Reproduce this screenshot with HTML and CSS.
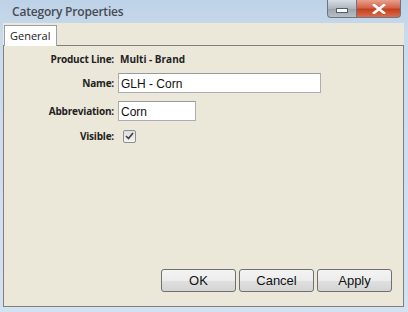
FILE: index.html
```html
<!DOCTYPE html>
<html lang="en">
<head>
  <meta charset="UTF-8" />
  <title>Category Properties</title>
  <link rel="stylesheet" href="styles.css">
</head>
<body>
  <div class="window">
    <div class="titlebar">
      <span class="title">Category Properties</span>
      <div class="caption-btns">
        <span class="cap-min"><span class="min-bar"></span></span>
        <span class="cap-close">
          <svg width="14" height="10" viewBox="0 0 14 10">
            <path d="M2 1 L12 9 M12 1 L2 9" stroke="#fff" stroke-width="2.6" stroke-linecap="square" />
          </svg>
        </span>
      </div>
    </div>

    <div class="client">
      <div class="tabs">
        <span class="tab active">General</span>
      </div>
      <div class="panel">
        <div class="form">
          <div class="row row-line">
            <label>Product Line:</label>
            <span class="value">Multi - Brand</span>
          </div>
          <div class="row row-name">
            <label for="name">Name:</label>
            <input id="name" class="field field-wide" type="text" value="GLH - Corn" />
          </div>
          <div class="row row-abbr">
            <label for="abbr">Abbreviation:</label>
            <input id="abbr" class="field field-short" type="text" value="Corn" />
          </div>
          <div class="row row-visible">
            <label>Visible:</label>
            <span class="check">
              <svg width="9" height="8" viewBox="0 0 9 8">
                <path d="M1 4 L3.5 6.5 L8 1" fill="none" stroke="#444" stroke-width="1.7" />
              </svg>
            </span>
          </div>
        </div>

        <div class="actions">
          <button>OK</button>
          <button>Cancel</button>
          <button>Apply</button>
        </div>
      </div>
    </div>
  </div>
</body>
</html>
```

FILE: styles.css
```css
html, body {
  margin: 0;
  height: 100%;
}
body {
  background: #cfdeee;
}

.window {
  height: 100%;
  display: flex;
  flex-direction: column;
  background: linear-gradient(to bottom, #bed2e7 0px, #cadbed 40px, #d3e2f1 100%);
  box-sizing: border-box;
}

.titlebar {
  height: 23px;
  display: flex;
  justify-content: space-between;
  align-items: flex-start;
  padding-left: 12px;
}
.title {
  font-family: "Open Sans", sans-serif;
  font-size: 12px;
  font-weight: 600;
  color: #474b52;
  margin-top: 3px;
  letter-spacing: -0.2px;
}
.caption-btns {
  display: flex;
  margin-right: 7px;
}
.cap-min, .cap-close {
  height: 18px;
  display: flex;
  align-items: center;
  justify-content: center;
  box-sizing: border-box;
  border: 1px solid #6d7580;
  border-top: none;
}
.cap-min {
  width: 30px;
  border-radius: 0 0 0 4px;
  background: linear-gradient(to bottom, #d8dde3, #aeb6bf 50%, #9aa3ad 51%, #b7bec6);
}
.min-bar {
  width: 10px;
  height: 3px;
  margin-top: 4px;
  background: #fff;
  border: 1px solid #555d66;
}
.cap-close {
  width: 44px;
  border-left: none;
  border-radius: 0 0 4px 0;
  background: linear-gradient(to bottom, #e8a08c, #d4644a 45%, #c4401f 55%, #d96e4c);
}

.client {
  flex: 1;
  margin: 0 4px 5px 3px;
  background: #ebe7d9;
  display: flex;
  flex-direction: column;
}
.tabs {
  height: 22px;
  display: flex;
  align-items: flex-end;
  padding-left: 1px;
}
.tab {
  font-family: "Open Sans", sans-serif;
  font-size: 11px;
  color: #222;
  background: #fff;
  height: 21px;
  box-sizing: border-box;
  padding: 2px 6px 0 5px;
  border: 1px solid #9aa0a6;
  border-bottom: none;
  margin-bottom: -1px;
  position: relative;
}

.panel {
  flex: 1;
  border: 1px solid #7f7f7f;
  display: flex;
  flex-direction: column;
  justify-content: space-between;
}

.form {
  padding-top: 4px;
  font-family: "Open Sans", sans-serif;
  font-size: 10px;
  color: #222;
}
.row {
  display: flex;
  align-items: center;
  height: 20px;
}
.row label {
  width: 110px;
  text-align: right;
  font-weight: 700;
  margin-right: 4px;
  letter-spacing: -0.2px;
}
.row-line { height: 18px; }
.row-name { margin-top: 5px; }
.row-abbr { margin-top: 8px; }
.row-visible { margin-top: 5px; }

.value {
  font-weight: 700;
  margin-left: 2px;
}

.field {
  height: 20px;
  box-sizing: border-box;
  border: 1px solid #abadb3;
  border-top-color: #979a9f;
  background: #fff;
  font-family: "Liberation Sans", Arial, sans-serif;
  font-size: 12px;
  color: #111;
  padding: 1px 2px 0;
  margin: 0;
}
.field-wide { width: 203px; }
.field-short { width: 78px; }

.check {
  width: 13px;
  height: 13px;
  margin-left: 5px;
  box-sizing: border-box;
  border: 1px solid #8f8f8f;
  border-radius: 2px;
  background: linear-gradient(to bottom, #dedede, #f4f4f4);
  display: flex;
  align-items: center;
  justify-content: center;
}

.actions {
  display: flex;
  justify-content: flex-end;
  gap: 3px;
  padding: 0 11px 14px 0;
}
.actions button {
  width: 75px;
  height: 23px;
  border: 1px solid #707070;
  border-radius: 3px;
  background: linear-gradient(to bottom, #f4f4f4 0%, #ececec 50%, #e0e0e0 51%, #d4d4d4 100%);
  font-family: "Liberation Sans", Arial, sans-serif;
  font-size: 13px;
  color: #111;
  padding: 0;
}
```
